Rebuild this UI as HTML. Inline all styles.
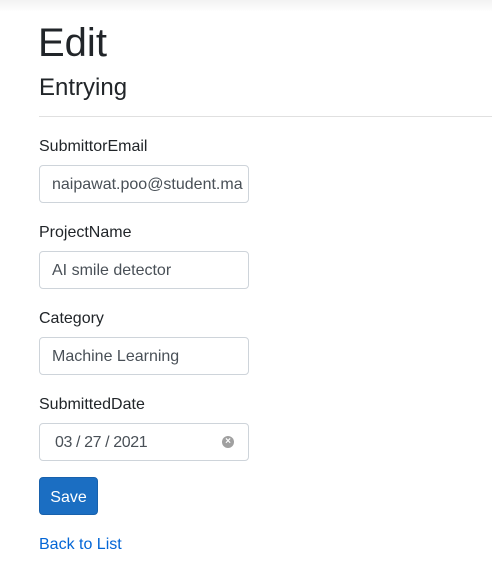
<!DOCTYPE html>
<html><head><style>
body{margin:0;background:#fff;font-family:"Liberation Sans",sans-serif;color:#212529;width:492px;height:571px;overflow:hidden;position:relative}
.top{position:absolute;left:0;top:0;width:492px;height:12px;background:linear-gradient(#f2f2f2,#fff)}
.a{position:absolute;left:39px;white-space:nowrap}
h1{position:absolute;left:38px;top:19px;margin:0;font-weight:400;font-size:40px;line-height:48px}
h4{position:absolute;left:39px;top:73px;margin:0;font-weight:400;font-size:24px;line-height:30px}
hr{position:absolute;left:39px;top:116px;width:453px;margin:0;border:0;border-top:1px solid #e0e0e0}
.l{font-size:16px;line-height:20px}
.i{position:absolute;left:39px;width:208px;height:36px;border:1px solid #ced4da;border-radius:4px;font-size:16px;line-height:38px;color:#495057;box-sizing:content-box;overflow:hidden;white-space:nowrap}
.i span{padding-left:12px}
.btn{position:absolute;left:39px;top:477px;width:57px;height:36px;background:#1b6ec2;border:1px solid #1861ac;border-radius:4px;color:#fff;font-size:16px;line-height:39px;text-align:center}
.x{position:absolute;right:14px;top:12px;width:12px;height:12px;border-radius:50%;background:#a0a0a0;color:#fff;font-size:10px;line-height:12px;text-align:center;font-weight:bold}
</style></head><body>
<div class="top"></div>
<h1>Edit</h1>
<h4>Entrying</h4>
<hr>
<div class="a l" style="top:137px">SubmittorEmail</div>
<div class="i" style="top:165px"><span>naipawat.poo@student.ma</span></div>
<div class="a l" style="top:223px">ProjectName</div>
<div class="i" style="top:251px"><span>AI smile detector</span></div>
<div class="a l" style="top:309px">Category</div>
<div class="i" style="top:337px"><span>Machine Learning</span></div>
<div class="a l" style="top:395px">SubmittedDate</div>
<div class="i" style="top:423px"><span style="padding-left:15px;letter-spacing:-0.4px">03 / 27 / 2021</span><div class="x">×</div></div>
<div class="btn">Save</div>
<div class="a l" style="top:535px;color:#0366d6">Back to List</div>
</body></html>
